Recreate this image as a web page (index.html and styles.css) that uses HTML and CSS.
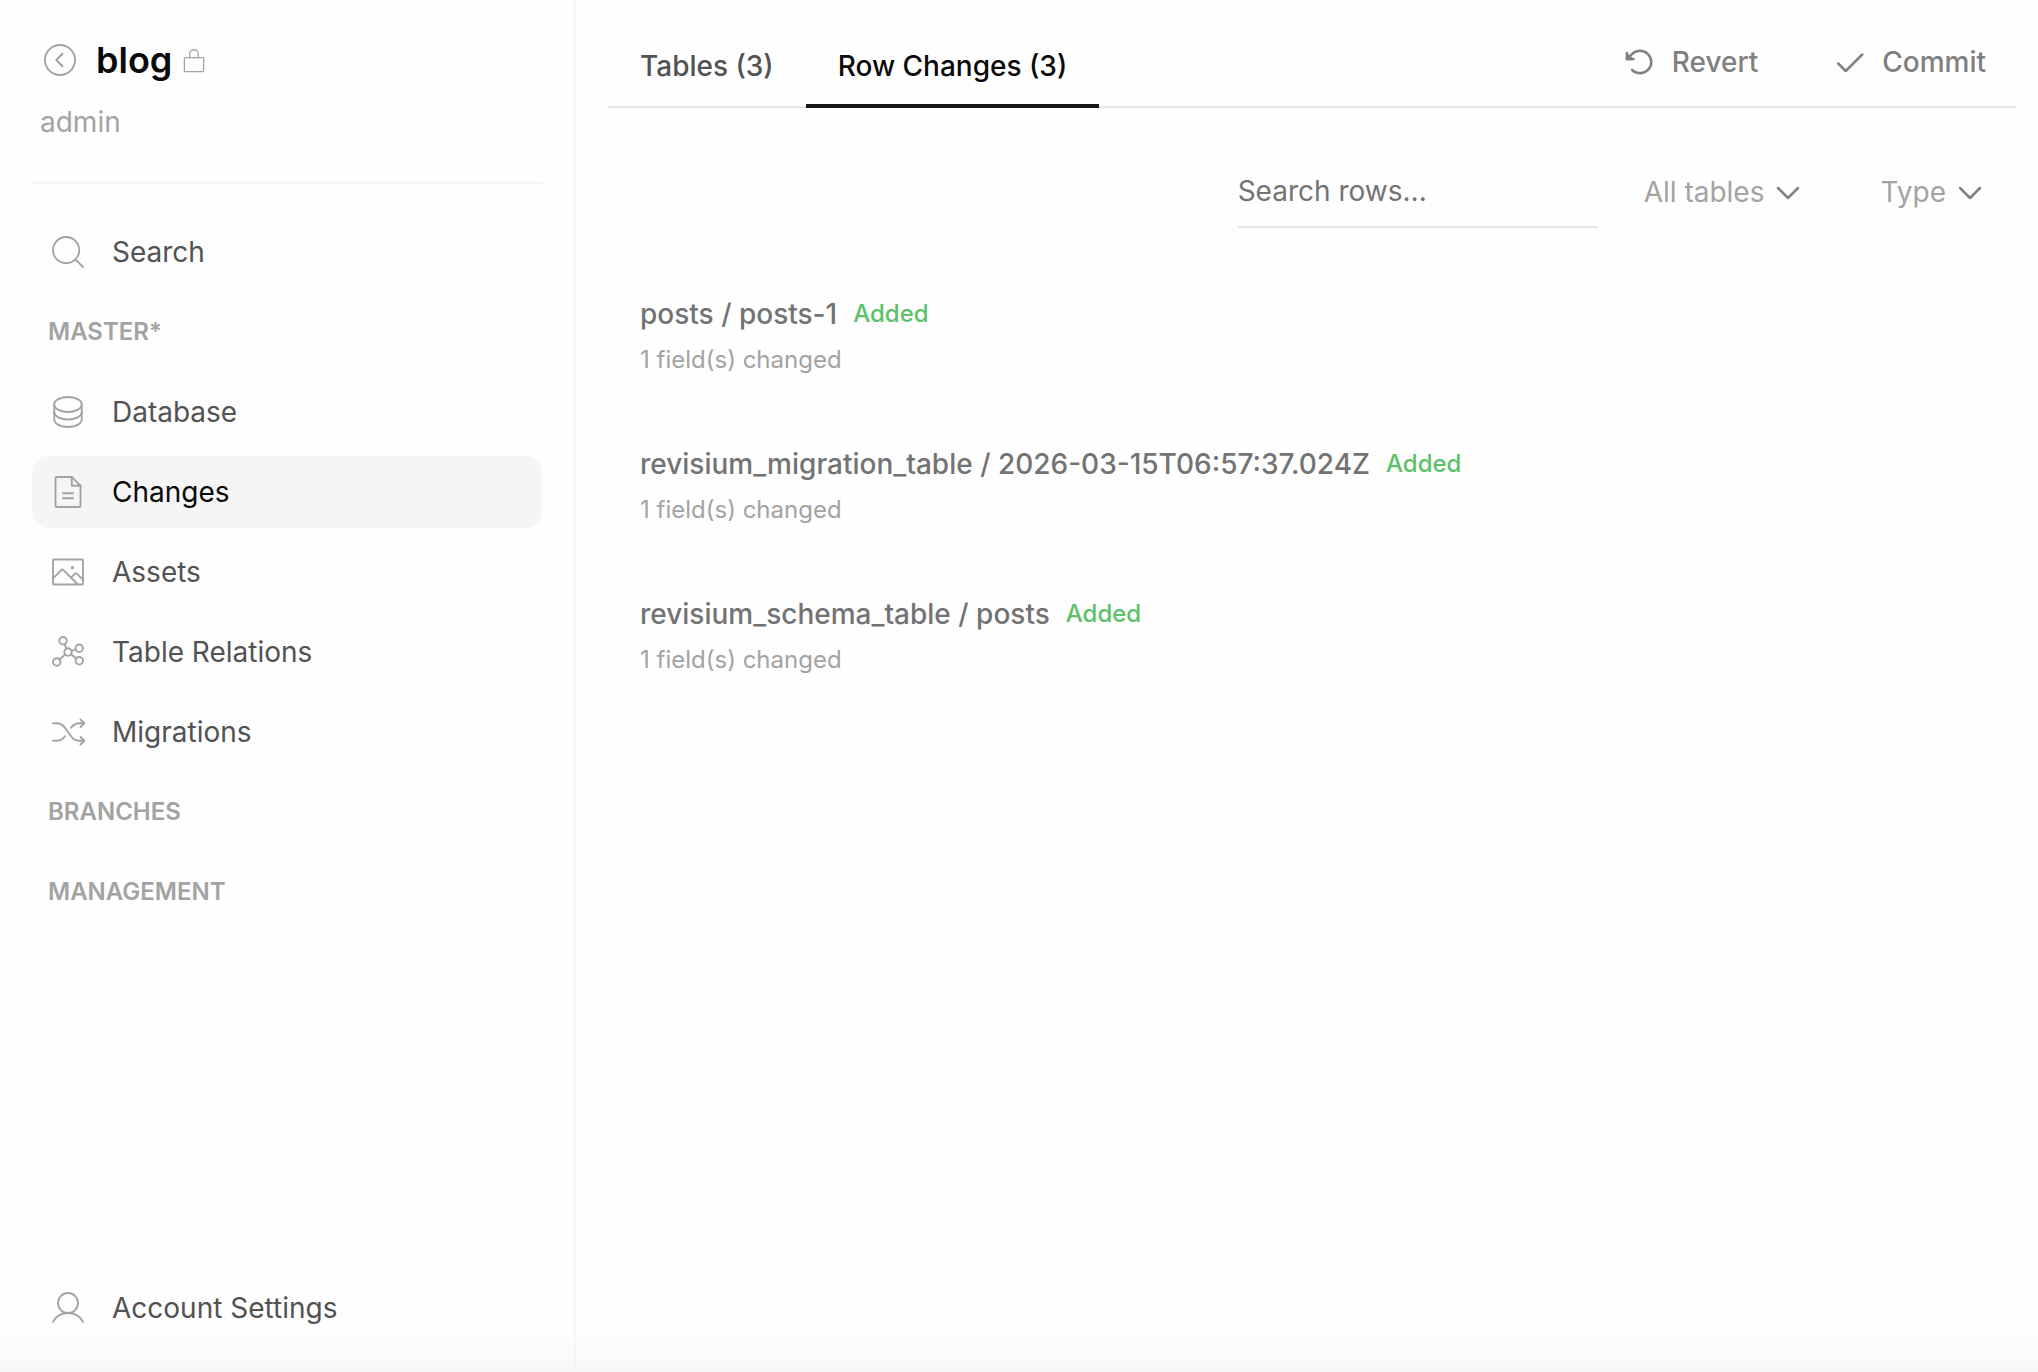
FILE: index.html
```html
<!DOCTYPE html>
<html lang="en">
<head>
    <meta charset="UTF-8">
    <meta name="viewport" content="width=device-width, initial-scale=1.0">
    <title>blog - Row Changes</title>
    <link rel="stylesheet" href="styles.css">
</head>
<body>
    <aside class="sidebar">
        <div class="project">
            <div class="project-title">
                <a href="#" class="back" aria-label="Back to projects">
                    <svg class="icon" viewBox="0 0 256 256"><circle cx="128" cy="128" r="96"/><polyline points="144 88 104 128 144 168"/></svg>
                </a>
                <h1>blog</h1>
                <svg class="icon icon-lock" viewBox="0 0 256 256"><rect x="40" y="88" width="176" height="128" rx="8"/><path d="M88,88V56a40,40,0,0,1,80,0V88"/></svg>
            </div>
            <p class="owner">admin</p>
        </div>

        <nav class="menu">
            <a href="#" class="menu-item">
                <svg class="icon" viewBox="0 0 256 256"><circle cx="116" cy="116" r="84"/><line x1="175.4" y1="175.4" x2="224" y2="224"/></svg>
                Search
            </a>
            <h2>MASTER*</h2>
            <a href="#" class="menu-item">
                <svg class="icon" viewBox="0 0 256 256"><ellipse cx="128" cy="80" rx="88" ry="48"/><path d="M40,80v48c0,26.5,39.4,48,88,48s88-21.5,88-48V80"/><path d="M40,128v48c0,26.5,39.4,48,88,48s88-21.5,88-48V128"/></svg>
                Database
            </a>
            <a href="#" class="menu-item active">
                <svg class="icon" viewBox="0 0 256 256"><path d="M200,224H56a8,8,0,0,1-8-8V40a8,8,0,0,1,8-8h96l56,56V216A8,8,0,0,1,200,224Z"/><polyline points="152 32 152 88 208 88"/><line x1="96" y1="136" x2="160" y2="136"/><line x1="96" y1="168" x2="160" y2="168"/></svg>
                Changes
            </a>
            <a href="#" class="menu-item">
                <svg class="icon" viewBox="0 0 256 256"><rect x="32" y="48" width="192" height="160" rx="8"/><path d="M147.3,164,173,138.3a8,8,0,0,1,11.3,0L224,178"/><path d="M32,168.7l54.3-54.4a8,8,0,0,1,11.4,0L191.3,208"/><circle class="dot" cx="156" cy="100" r="10"/></svg>
                Assets
            </a>
            <a href="#" class="menu-item">
                <svg class="icon" viewBox="0 0 256 256"><circle cx="128" cy="128" r="24"/><circle cx="96" cy="56" r="24"/><circle cx="200" cy="104" r="24"/><circle cx="200" cy="184" r="24"/><circle cx="56" cy="192" r="24"/><line x1="118.3" y1="106.1" x2="105.8" y2="77.9"/><line x1="177.2" y1="111.6" x2="150.8" y2="120.4"/><line x1="181.1" y1="169.3" x2="146.9" y2="142.7"/><line x1="110.1" y1="143.9" x2="73.9" y2="176.1"/></svg>
                Table Relations
            </a>
            <a href="#" class="menu-item">
                <svg class="icon" viewBox="0 0 256 256"><path d="M32,72H55.1a64,64,0,0,1,52,26.8l41.8,58.4a64,64,0,0,0,52,26.8H232"/><polyline points="208 48 232 72 208 96"/><polyline points="208 160 232 184 208 208"/><path d="M147.7,100.5l1.2-1.7a64,64,0,0,1,52-26.8H232"/><path d="M32,184H55.1a64,64,0,0,0,52-26.8l1.2-1.7"/></svg>
                Migrations
            </a>
            <h2>BRANCHES</h2>
            <h2>MANAGEMENT</h2>
        </nav>

        <a href="#" class="menu-item account">
            <svg class="icon" viewBox="0 0 256 256"><circle cx="128" cy="96" r="64"/><path d="M32,216c19.4-33.5,54.6-56,96-56s76.6,22.5,96,56"/></svg>
            Account Settings
        </a>
    </aside>

    <main class="content">
        <div class="toolbar">
            <div class="tabs" role="tablist">
                <button type="button" role="tab" class="tab">Tables (3)</button>
                <button type="button" role="tab" class="tab active" aria-selected="true">Row Changes (3)</button>
            </div>
            <div class="actions">
                <button type="button" class="action">
                    <svg class="icon icon-small" viewBox="0 0 256 256"><polyline points="24 56 24 104 76 104"/><polygon class="head" points="24 70 24 104 60 104"/><path d="M64,191a90,90,0,1,0,0-126L24,104"/></svg>
                    Revert
                </button>
                <button type="button" class="action">
                    <svg class="icon icon-small" viewBox="0 0 256 256"><polyline points="34 140 94 200 226 68"/></svg>
                    Commit
                </button>
            </div>
        </div>

        <div class="filters">
            <input type="text" class="search" placeholder="Search rows..." aria-label="Search rows">
            <button type="button" class="filter">
                All tables
                <svg class="icon icon-caret" viewBox="0 0 256 256"><polyline points="208 96 128 176 48 96"/></svg>
            </button>
            <button type="button" class="filter">
                Type
                <svg class="icon icon-caret" viewBox="0 0 256 256"><polyline points="208 96 128 176 48 96"/></svg>
            </button>
        </div>

        <ul class="changes">
            <li>
                <div class="change-title"><a href="#">posts / posts-1</a><span class="status">Added</span></div>
                <p>1 field(s) changed</p>
            </li>
            <li>
                <div class="change-title"><a href="#">revisium_migration_table / 2026-03-15T06:57:37.024Z</a><span class="status">Added</span></div>
                <p>1 field(s) changed</p>
            </li>
            <li>
                <div class="change-title"><a href="#">revisium_schema_table / posts</a><span class="status">Added</span></div>
                <p>1 field(s) changed</p>
            </li>
        </ul>
    </main>
</body>
</html>
```
FILE: styles.css
```css
* {
    margin: 0;
    padding: 0;
    box-sizing: border-box;
}

body {
    display: flex;
    min-height: 100vh;
    font-family: Inter, "Liberation Sans", sans-serif;
    font-size: 28px;
    line-height: 40px;
    color: #525252;
    background: linear-gradient(to top, #f7f7f7, #fbfbfb 20px, #fefefe 56px);
}

a {
    color: inherit;
    text-decoration: none;
}

button,
input {
    font: inherit;
    color: inherit;
    background: none;
    border: none;
}

button {
    cursor: pointer;
}

.icon {
    display: block;
    flex: none;
    width: 40px;
    height: 40px;
    fill: none;
    stroke: #a3a3a3;
    stroke-width: 12;
    stroke-linecap: round;
    stroke-linejoin: round;
}

.icon .dot {
    fill: #a3a3a3;
    stroke: none;
}

/* Sidebar */
.sidebar {
    display: flex;
    flex-direction: column;
    flex: none;
    width: 576px;
    padding: 32px 32px 28px;
    border-right: 2px solid #f5f5f5;
}

.project {
    padding: 0 8px 40px;
    margin-bottom: 32px;
    border-bottom: 2px solid #f5f5f5;
}

.project-title {
    display: flex;
    align-items: center;
    height: 56px;
}

.project-title h1 {
    margin: 0 8px 0 16px;
    font-size: 36px;
    font-weight: 600;
    color: #0a0a0a;
}

.icon-lock {
    width: 28px;
    height: 28px;
    margin-top: 4px;
}

.owner {
    padding-top: 14px;
    color: #a3a3a3;
}

.menu {
    display: flex;
    flex-direction: column;
    gap: 8px;
}

.menu-item {
    display: flex;
    align-items: center;
    gap: 24px;
    height: 72px;
    padding: 0 16px;
    border-radius: 16px;
}

.menu-item.active {
    color: #0a0a0a;
    background: #f5f5f5;
}

.menu h2 {
    padding: 0 16px;
    font-size: 24px;
    font-weight: 600;
    line-height: 72px;
    color: #a3a3a3;
}

.account {
    margin-top: auto;
}

/* Content */
.content {
    flex: 1;
    padding: 24px 22px 0 32px;
}

.toolbar {
    display: flex;
    justify-content: space-between;
    height: 84px;
    border-bottom: 2px solid #e5e5e5;
}

.tabs {
    display: flex;
    margin-bottom: -2px;
}

.tab {
    padding: 4px 32px 0;
    font-weight: 500;
    border-bottom: 4px solid transparent;
}

.tab.active {
    color: #0a0a0a;
    border-color: #171717;
}

.actions {
    display: flex;
    align-items: center;
    gap: 76px;
    padding: 0 30px 6px 0;
}

.action {
    display: flex;
    align-items: center;
    gap: 16px;
    font-weight: 500;
    color: #808080;
}

.icon-small {
    width: 32px;
    height: 32px;
    stroke: #808080;
    stroke-width: 20;
}

.icon-small .head {
    fill: #808080;
}

.filters {
    display: flex;
    justify-content: flex-end;
    align-items: center;
    padding: 52px 30px 0 0;
}

.search {
    width: 360px;
    height: 68px;
    padding-bottom: 4px;
    border-bottom: 2px solid #e5e5e5;
}

.search::placeholder {
    color: #737373;
}

.filter {
    display: flex;
    align-items: center;
    gap: 8px;
    margin-left: 76px;
    padding-bottom: 4px;
    color: #a3a3a3;
}

.search + .filter {
    margin-left: 46px;
}

.icon-caret {
    width: 32px;
    height: 32px;
    stroke: #808080;
    stroke-width: 20;
}

.changes {
    display: flex;
    flex-direction: column;
    gap: 64px;
    padding: 66px 32px;
    list-style: none;
}

.change-title {
    display: flex;
    align-items: center;
    gap: 16px;
    font-weight: 500;
    color: #737373;
}

.status {
    font-size: 24px;
    color: #5cc168;
}

.changes p {
    padding-top: 6px;
    font-size: 24px;
    color: #a3a3a3;
}
```
